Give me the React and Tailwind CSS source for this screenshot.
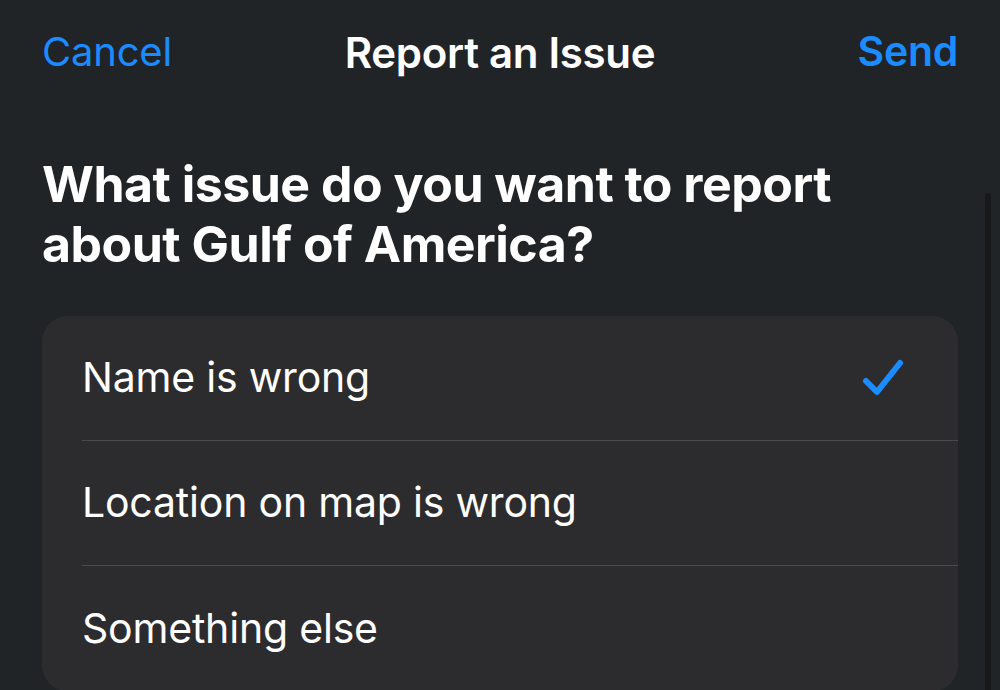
// Report an Issue sheet (iOS dark mode)

const OPTIONS = [
  { label: "Name is wrong", selected: true },
  { label: "Location on map is wrong", selected: false },
  { label: "Something else", selected: false },
];

function Check() {
  return (
    <svg width="42" height="38" viewBox="0 0 42 38" fill="none">
      <path
        d="M4 22 L15 33 L38 4"
        stroke="#1a8cff"
        strokeWidth="6"
        strokeLinecap="round"
        strokeLinejoin="round"
      />
    </svg>
  );
}

export default function App() {
  return (
    <div
      className="relative w-[1000px] h-[690px] overflow-hidden bg-[#212427] text-white"
      style={{ fontFamily: "Inter, 'Noto Sans', sans-serif" }}
    >
      {/* nav bar */}
      <div className="relative flex items-center justify-between px-[42px] h-[104px]">
        <button className="text-[40px] text-[#1a8cff] tracking-[-0.2px]">Cancel</button>
        <h1 className="absolute inset-x-0 text-center text-[42px] font-semibold tracking-[-0.3px] pointer-events-none">
          Report an Issue
        </h1>
        <button className="text-[41px] font-semibold text-[#1a8cff] tracking-[-0.3px]">Send</button>
      </div>

      <h2 className="px-[42px] mt-[50px] text-[50px] font-bold leading-[60px] tracking-[-0.5px]">
        What issue do you want to report
        <br />
        about Gulf of America?
      </h2>

      <div className="mx-[42px] mt-[42px] rounded-[26px] bg-[#2c2c2e] overflow-hidden">
        {OPTIONS.map((o, i) => (
          <div key={o.label} className="pl-[40px]">
            <div
              className={
                "flex items-center justify-between h-[125px] pr-[54px] " +
                (i < OPTIONS.length - 1 ? "border-b border-[#4b4b4e]" : "")
              }
            >
              <span className="text-[41px] tracking-[-0.2px]">{o.label}</span>
              {o.selected && <Check />}
            </div>
          </div>
        ))}
      </div>

      {/* scroll indicator */}
      <div className="absolute left-[985px] top-[193px] w-[6px] h-[520px] rounded-full bg-[#17191b]" />
    </div>
  );
}
